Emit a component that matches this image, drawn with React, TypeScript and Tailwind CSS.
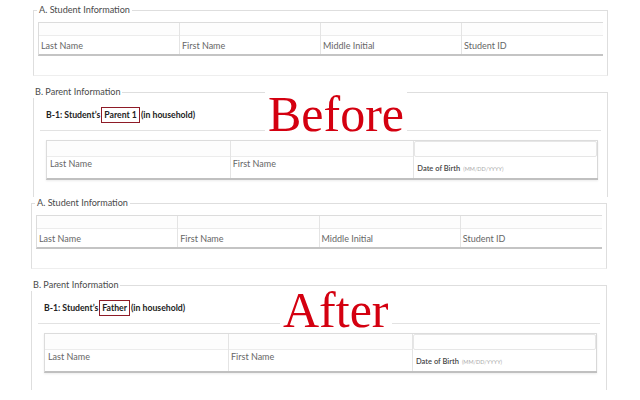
import React from "react";

const font = { fontFamily: "Lato, 'Open Sans', Arial, sans-serif" };

function Cell({ label, last }: { label: string; last?: boolean }) {
  return (
    <div className={`flex flex-col ${last ? "" : "border-r border-[#e4e4e4]"}`}>
      <div className="h-[13px] border-b border-[#ececec] bg-[#fdfdfd]" />
      <div className="flex h-[18px] items-center pl-[2px] text-[9px] leading-none text-[#666]">
        {label}
      </div>
    </div>
  );
}

function FormBlock({ who, word, wordClass }: { who: string; word: string; wordClass: string }) {
  return (
    <div className="relative h-[193px] w-full overflow-hidden">
      <fieldset className="border border-b-[#eeeeee] border-[#dedede] px-[4px] pb-[19px] pt-[6px]">
        <legend className="-ml-[1px] px-[2px] text-[9.1px] leading-[12px] text-[#4a4a4a]">
          A. Student Information
        </legend>
        <div className="grid grid-cols-4 border-l border-t border-[#dcdcdc] border-b-2 border-b-[#c4c4c4]">
          <Cell label="Last Name" />
          <Cell label="First Name" />
          <Cell label="Middle Initial" />
          <Cell label="Student ID" last />
        </div>
      </fieldset>

      <fieldset className="mt-[10px] border border-[#dedede] pb-[14px]">
        <legend className="-ml-[1px] px-[2px] text-[9.1px] leading-[12px] text-[#4a4a4a]">
          B. Parent Information
        </legend>
        <div className="mx-[6px] flex h-[33px] items-center border-b border-[#e2e2e2] pl-[6px] pt-[2px] text-[8.7px] font-bold text-[#222]">
          B-1: Student&rsquo;s
          <span className="mx-[1px] inline-block border-[1.5px] border-[#8e1b27] px-[2px] py-[3px] leading-none">
            {who}
          </span>
          (in household)
        </div>
        <div className="ml-[12px] mr-[9px] mt-[9px] grid grid-cols-3 border-l border-t border-[#dcdcdc] border-b-2 border-b-[#c0c0c0] shadow-[0_1px_2px_rgba(0,0,0,0.08)]">
          <div className="flex flex-col border-r border-[#e4e4e4]">
            <div className="h-[16px] border-b border-[#ececec] bg-[#fdfdfd]" />
            <div className="h-[21px] pl-[3px] pt-[2px] text-[9px] leading-none text-[#666]">Last Name</div>
          </div>
          <div className="flex flex-col border-r border-[#e4e4e4]">
            <div className="h-[16px] border-b border-[#ececec] bg-[#fdfdfd]" />
            <div className="h-[21px] pl-[2px] pt-[2px] text-[9px] leading-none text-[#666]">First Name</div>
          </div>
          <div className="flex flex-col border-r border-[#d8d8d8]">
            <div className="h-[16px] rounded-[2px] border border-[#e6e6e6] bg-[#fefefe]" />
            <div className="flex h-[21px] items-end pb-[6px] pl-[3px] text-[7.5px] leading-none text-[#444]">
              <span className="font-semibold">Date of Birth</span>
              <span className="ml-[3px] text-[5.5px] text-[#aaa]">(MM/DD/YYYY)</span>
            </div>
          </div>
        </div>
        <div className="h-[40px]" />
      </fieldset>

      <div
        className={`absolute bg-white px-[3px] text-[50px] leading-[44px] text-[#d40010] ${wordClass}`}
        style={{ fontFamily: "'Liberation Serif', 'Times New Roman', serif" }}
      >
        {word}
      </div>
    </div>
  );
}

export default function App() {
  return (
    <div className="h-[400px] w-[640px] overflow-hidden bg-white" style={font}>
      <div className="ml-[33px] w-[575px] pt-[4px]">
        <FormBlock who="Parent 1" word="Before" wordClass="left-[232px] top-[88px]" />
      </div>
      <div className="ml-[31px] w-[576px]">
        <FormBlock who="Father" word="After" wordClass="left-[249px] top-[91px]" />
      </div>
    </div>
  );
}
